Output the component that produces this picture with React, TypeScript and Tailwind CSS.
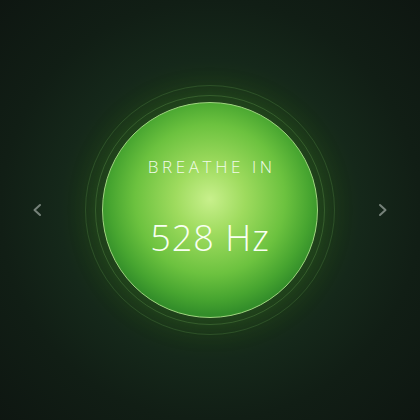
import React from "react";

export default function App() {
  return (
    <div
      className="w-[420px] h-[420px] overflow-hidden flex items-center justify-between px-[31px] relative"
      style={{
        background:
          "radial-gradient(circle at 210px 210px, #1f3d1d 0px, #1b3419 115px, #15281a 150px, #111e15 210px, #0e1611 300px)",
        fontFamily: '"Open Sans", "Noto Sans", sans-serif',
      }}
    >
      <svg width="12" height="14" viewBox="0 0 12 14" className="shrink-0">
        <path d="M9 2 L3.5 7 L9 12" fill="none" stroke="#76827a" strokeWidth="2" strokeLinecap="round" strokeLinejoin="round" />
      </svg>

      <div className="relative w-[250px] h-[250px] flex items-center justify-center">
        <div className="absolute inset-0 rounded-full border border-[#3f6b35]/50" />
        <div className="absolute inset-[10px] rounded-full border border-[#4d7e40]/50" />
        <div
          className="w-[216px] h-[216px] rounded-full border-[1.5px] border-[#9fd67f] flex flex-col items-center text-white"
          style={{
            background:
              "radial-gradient(circle at 50% 45%, #c8f08c 0px, #9edb5e 35px, #6cc23f 75px, #47a530 100px, #338e2a 115px)",
            boxShadow: "0 0 30px 4px rgba(60,140,40,0.3)",
          }}
        >
          <div className="mt-[55px] text-[17px] leading-none tracking-[3.6px] pl-[3.6px] font-light text-[#f0fbe8]">
            BREATHE IN
          </div>
          <div className="mt-[45px] text-[36px] leading-none font-light tracking-[1px] text-[#f8fff2]">
            528 Hz
          </div>
        </div>
      </div>

      <svg width="12" height="14" viewBox="0 0 12 14" className="shrink-0">
        <path d="M3 2 L8.5 7 L3 12" fill="none" stroke="#76827a" strokeWidth="2" strokeLinecap="round" strokeLinejoin="round" />
      </svg>
    </div>
  );
}
